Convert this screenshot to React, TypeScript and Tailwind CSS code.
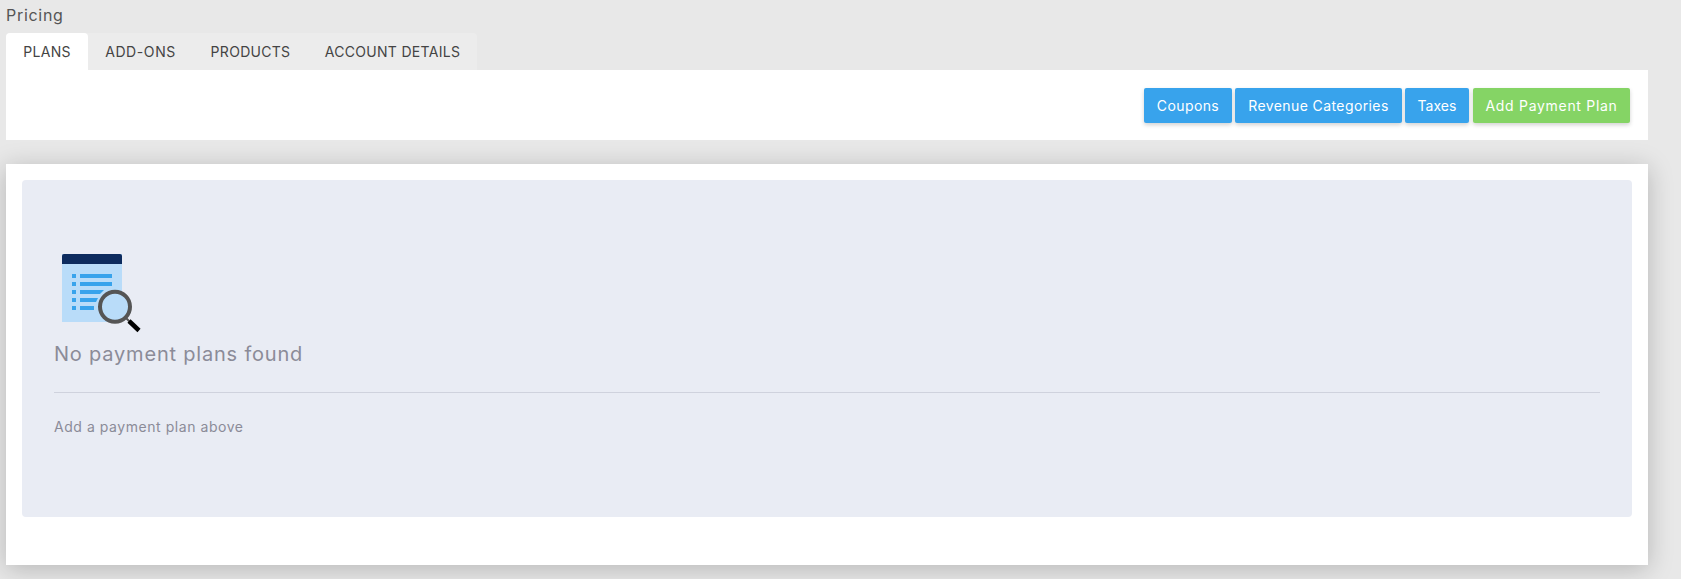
const font = { fontFamily: '"Inter", "Noto Sans", sans-serif' };

const tabs = [
  { label: 'PLANS', width: 'w-[82px] tracking-[0.3px]' },
  { label: 'ADD-ONS', width: 'w-[105px] tracking-[0.6px]' },
  { label: 'PRODUCTS', width: 'w-[115px] tracking-[0.3px]' },
  { label: 'ACCOUNT DETAILS', width: 'w-[169px] tracking-[0.3px]' },
];

export default function App() {
  return (
    <div className="min-h-[579px] overflow-hidden bg-[#e8e8e8] pl-[6px] pr-[33px]" style={font}>
      <div className="flex h-[29px] items-center text-[16px] tracking-[0.7px] text-[#555]">Pricing</div>
      <div className="mt-[4px] flex h-[37px] w-fit rounded-t bg-[#ececec]">
        {tabs.map((t, i) => (
          <div
            key={t.label}
            className={`flex items-center justify-center text-[14px] text-[#444] ${t.width} ${i === 0 ? 'rounded-t bg-white' : ''}`}
          >
            {t.label}
          </div>
        ))}
      </div>
      <div className="flex h-[70px] items-start justify-end gap-[3px] bg-white pt-[18px] pr-[18px]">
        <Btn label="Coupons" w="w-[88px] tracking-[0.4px]" />
        <Btn label="Revenue Categories" w="w-[167px] tracking-[0.4px]" />
        <Btn label="Taxes" w="w-[64px]" />
        <Btn label="Add Payment Plan" w="ml-[1px] w-[157px] tracking-[0.7px]" green />
      </div>
      <div className="mt-[24px] h-[401px] bg-white p-4 shadow-[0_4px_24px_rgba(0,0,0,0.22)]">
        <div className="h-[337px] rounded bg-[#e9ecf4] px-8 pt-[74px]">
          <svg width="90" height="80" viewBox="0 0 90 80" className="ml-[7px] block">
            <rect x="1" y="0" width="60" height="68" fill="#b9dcf9" />
            <path d="M1 10 V2 a2 2 0 0 1 2-2 H59 a2 2 0 0 1 2 2 V10 Z" fill="#0d2b5e" />
            <g fill="#38a3ec">
              <rect x="11" y="20" width="4" height="4" />
              <rect x="11" y="28" width="4" height="4" />
              <rect x="11" y="36" width="4" height="4" />
              <rect x="11" y="44" width="4" height="4" />
              <rect x="11" y="52" width="4" height="4" />
              <rect x="19" y="20" width="32" height="4" />
              <rect x="19" y="28" width="32" height="4" />
              <path d="M19 36 H43 L39 40 H19 Z" />
              <path d="M19 44 H37 L35 48 H19 Z" />
              <rect x="19" y="52" width="14" height="4" />
            </g>
            <circle cx="54" cy="52.700" r="15" fill="#b9dcf9" stroke="#555" strokeWidth="4" />
            <path d="M65 64 L69 68" stroke="#555" strokeWidth="2" />
            <path d="M68 67 L78 76.500" stroke="#000" strokeWidth="4.500" />
          </svg>
          <div className="mt-[6px] h-[28px] text-[20px] leading-[28px] tracking-[0.8px] text-[#8b8b98]">No payment plans found</div>
          <div className="mt-[24px] h-px bg-[#cfd2dd]" />
          <div className="mt-[24px] text-[14px] leading-5 tracking-[0.55px] text-[#8b8b98]">Add a payment plan above</div>
        </div>
      </div>
    </div>
  );
}

function Btn({ label, w, green }: { label: string; w: string; green?: boolean }) {
  return (
    <button
      className={`flex h-[35px] items-center justify-center rounded-[2px] text-[14px] text-white shadow-[0_2px_4px_rgba(0,0,0,0.18)] ${w} ${green ? 'bg-[#85d465]' : 'bg-[#38a3ec]'}`}
    >
      {label}
    </button>
  );
}
